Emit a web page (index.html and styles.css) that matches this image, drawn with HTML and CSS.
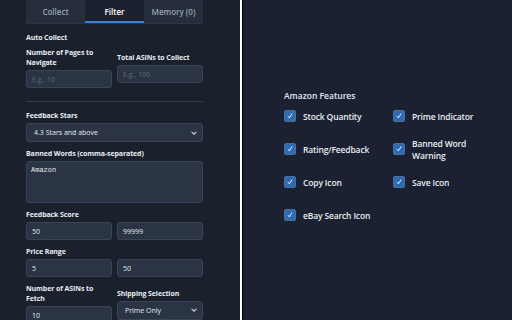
FILE: index.html
```html
<!DOCTYPE html>
<html>
<head>
  <title>ASIN Collector</title>
  <link rel="stylesheet" href="styles.css">
</head>
<body>
  <div id="container">
    <!-- Popup (left) -->
    <div id="popup">
      <div class="tabs">
        <div class="tab">Collect</div>
        <div class="tab active">Filter</div>
        <div class="tab">Memory (0)</div>
      </div>

      <div class="section-title">Auto Collect</div>
      <div class="row">
        <div class="col">
          <label>Number of Pages to Navigate</label>
          <input type="text" placeholder="E.g., 10">
        </div>
        <div class="col">
          <label>Total ASINs to Collect</label>
          <input type="text" placeholder="E.g., 100">
        </div>
      </div>

      <hr>

      <div class="field">
        <label>Feedback Stars</label>
        <div class="select">
          <span>4.3 Stars and above</span>
          <svg viewBox="0 0 10 10"><path d="M2 3.5l3 3 3-3"/></svg>
        </div>
      </div>

      <div class="field">
        <label>Banned Words (comma-separated)</label>
        <textarea>Amazon</textarea>
      </div>

      <div class="field">
        <label>Feedback Score</label>
        <div class="pair">
          <input type="text" value="50">
          <input type="text" value="99999">
        </div>
      </div>

      <div class="field">
        <label>Price Range</label>
        <div class="pair">
          <input type="text" value="5">
          <input type="text" value="50">
        </div>
      </div>

      <div class="row">
        <div class="col">
          <label>Number of ASINs to Fetch</label>
          <input type="text" value="10">
        </div>
        <div class="col">
          <label>Shipping Selection</label>
          <div class="select">
            <span>Prime Only</span>
            <svg viewBox="0 0 10 10"><path d="M2 3.5l3 3 3-3"/></svg>
          </div>
        </div>
      </div>
    </div>

    <div class="divider"></div>

    <!-- Options (right) -->
    <div id="options">
      <div class="features-title">Amazon Features</div>
      <div class="features">
        <div class="feature"><span class="check"><svg viewBox="0 0 12 12"><path d="M3.5 6.2l1.7 2L8.6 3"/></svg></span><span>Stock Quantity</span></div>
        <div class="feature"><span class="check"><svg viewBox="0 0 12 12"><path d="M3.5 6.2l1.7 2L8.6 3"/></svg></span><span>Prime Indicator</span></div>
        <div class="feature"><span class="check"><svg viewBox="0 0 12 12"><path d="M3.5 6.2l1.7 2L8.6 3"/></svg></span><span>Rating/Feedback</span></div>
        <div class="feature"><span class="check"><svg viewBox="0 0 12 12"><path d="M3.5 6.2l1.7 2L8.6 3"/></svg></span><span>Banned Word Warning</span></div>
        <div class="feature"><span class="check"><svg viewBox="0 0 12 12"><path d="M3.5 6.2l1.7 2L8.6 3"/></svg></span><span>Copy Icon</span></div>
        <div class="feature"><span class="check"><svg viewBox="0 0 12 12"><path d="M3.5 6.2l1.7 2L8.6 3"/></svg></span><span>Save Icon</span></div>
        <div class="feature"><span class="check"><svg viewBox="0 0 12 12"><path d="M3.5 6.2l1.7 2L8.6 3"/></svg></span><span>eBay Search Icon</span></div>
      </div>
    </div>
  </div>
</body>
</html>
```

FILE: styles.css
```css
/* General Page Styling */
body {
  margin: 0;
  font-family: 'Open Sans', 'Noto Sans', sans-serif;
  background: #1a202c;
  color: #e2e8f0;
}
#container {
  display: flex;
  width: 512px;
  height: 320px;
  overflow: hidden;
}
/* Left popup */
#popup {
  width: 240px;
  box-sizing: border-box;
  padding: 0 37px 0 26px;
  flex-shrink: 0;
}
.divider {
  width: 2px;
  background: #fff;
  border-right: 1px solid #000;
  flex-shrink: 0;
}
#options {
  flex: 1;
  padding: 90px 0 0 41px;
  background: #1b2130;
}
/* Tabs */
.tabs {
  display: flex;
  height: 23px;
  border-bottom: 1px solid #2c3545;
}
.tab {
  flex: 1;
  display: flex;
  align-items: center;
  justify-content: center;
  font-size: 8px;
  font-weight: 600;
  color: #98a3b3;
  background: #262e3d;
}
.tab.active {
  background: #1b2130;
  color: #fff;
  box-shadow: inset 0 -2px 0 #3b7fd0;
}
/* Labels and inputs */
label,
.section-title {
  display: block;
  font-size: 7px;
  font-weight: 700;
  line-height: 10px;
  color: #e8edf3;
  letter-spacing: -0.1px;
}
.section-title {
  margin: 9px 0 5px;
}
.row {
  display: flex;
  align-items: center;
  gap: 5px;
}
.col {
  flex: 1;
  min-width: 0;
}
.col label,
.field label {
  margin-bottom: 2px;
}
input[type="text"],
textarea,
.select {
  display: block;
  width: 100%;
  box-sizing: border-box;
  height: 18px;
  padding: 0 5px;
  font-family: inherit;
  font-size: 7px;
  color: #e2e8f0;
  background: #2b3444;
  border: 1px solid #3a4455;
  border-radius: 3px;
  outline: none;
}
input::placeholder {
  color: #5f6a7b;
}
textarea {
  height: 42px;
  padding: 4px 4px;
  font-family: 'Liberation Mono', monospace;
  font-size: 7px;
  resize: none;
}
.select {
  height: 19px;
  display: flex;
  align-items: center;
  justify-content: space-between;
  padding: 0 4px 0 7px;
}
.select svg {
  width: 8px;
  height: 8px;
  fill: none;
  stroke: #cbd2dc;
  stroke-width: 1.4;
}
hr {
  border: none;
  border-top: 1px solid #333c4c;
  margin: 13px 0 9px;
}
.field {
  margin-bottom: 7px;
}
.pair {
  display: flex;
  gap: 5px;
}
/* Right side features */
.features-title {
  font-size: 8.5px;
  font-weight: 600;
  line-height: 12px;
  margin-bottom: 3px;
}
.features {
  display: grid;
  grid-template-columns: 109px 90px;
  grid-auto-rows: 24px;
  row-gap: 9px;
}
.feature {
  display: flex;
  align-items: center;
  gap: 7px;
  font-size: 8.5px;
  font-weight: 600;
  line-height: 12px;
  color: #e8edf3;
  letter-spacing: -0.15px;
}
.check {
  flex-shrink: 0;
  width: 12px;
  height: 12px;
  margin-bottom: 3px;
  box-sizing: border-box;
  border: 1px solid #4d6f97;
  border-radius: 2px;
  background: #2f6bb3;
  display: flex;
}
.check svg {
  width: 100%;
  height: 100%;
  fill: none;
  stroke: #fff;
  stroke-width: 1.1;
}
```
